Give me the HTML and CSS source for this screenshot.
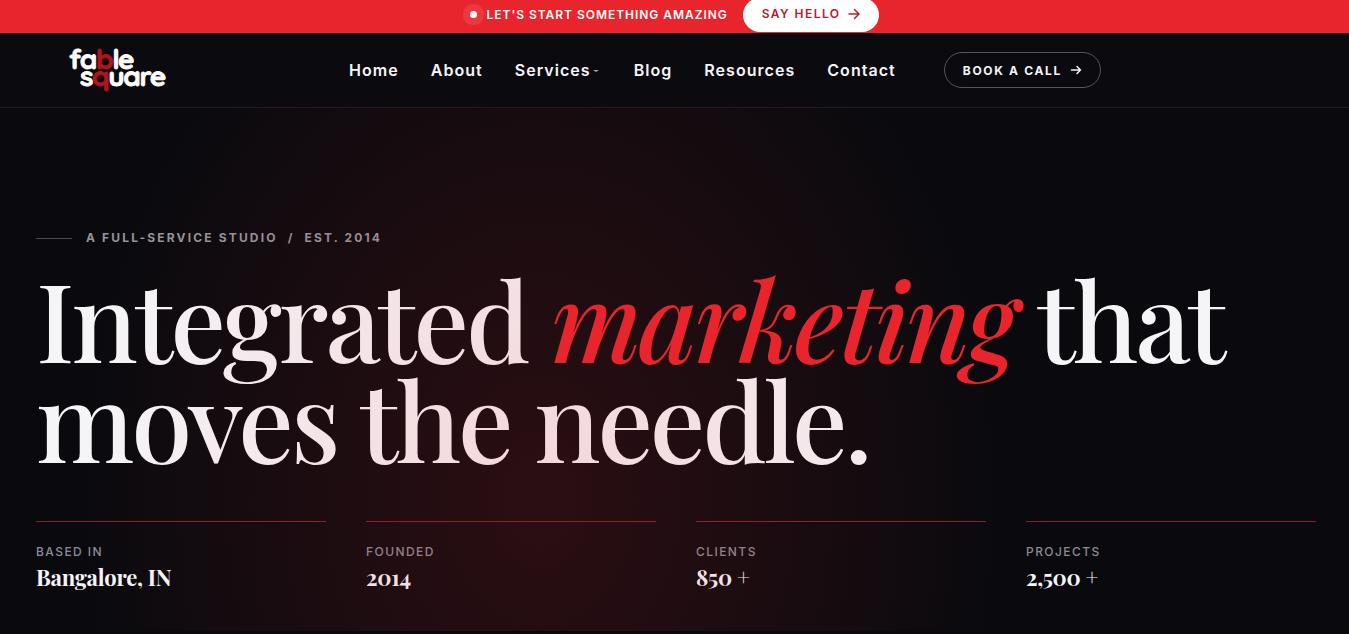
FILE: index.html
```html
<!DOCTYPE html>
<html lang="en">
<head>
  <meta charset="UTF-8" />
  <meta name="viewport" content="width=device-width, initial-scale=1" />
  <title>Fable Square - Integrated Marketing Studio</title>
  <link rel="stylesheet" href="styles.css">
</head>
<body>
  <div class="topbar">
    <span class="pulse"></span>
    <span class="topbar-text">Let's start something amazing</span>
    <a href="#hello" class="hello-btn">Say hello
      <svg class="arrow" viewBox="0 0 12 12" aria-hidden="true"><path d="M1 6h10M6.500 1.500 11 6l-4.500 4.500" /></svg>
    </a>
  </div>

  <header class="header">
    <a href="#" class="logo" aria-label="Fable Square">
      <svg width="104" height="52" viewBox="0 0 104 52">
        <text x="0" y="25">fa<tspan class="logo-red">b</tspan>le</text>
        <text x="11" y="42">s<tspan class="logo-red">q</tspan>uare</text>
      </svg>
    </a>
    <nav class="nav">
      <a href="#home">Home</a>
      <a href="#about">About</a>
      <a href="#services" class="has-menu">Services<span class="caret"></span></a>
      <a href="#blog">Blog</a>
      <a href="#resources">Resources</a>
      <a href="#contact">Contact</a>
    </nav>
    <a href="#call" class="call-btn">Book a call
      <svg class="arrow" viewBox="0 0 12 12" aria-hidden="true"><path d="M1.500 6h9M7 2.500 10.500 6 7 9.500" /></svg>
    </a>
  </header>

  <main class="hero">
    <div class="hero-inner">
      <p class="eyebrow">A full-service studio &nbsp;/&nbsp; Est. 2014</p>
      <h1>Integrated <em>marketing</em> that moves the needle.</h1>
      <dl class="stats">
        <div class="stat">
          <dt>Based in</dt>
          <dd>Bangalore, IN</dd>
        </div>
        <div class="stat">
          <dt>Founded</dt>
          <dd>2014</dd>
        </div>
        <div class="stat">
          <dt>Clients</dt>
          <dd>850 <span class="plus">+</span></dd>
        </div>
        <div class="stat">
          <dt>Projects</dt>
          <dd>2,500 <span class="plus">+</span></dd>
        </div>
      </dl>
    </div>
  </main>
</body>
</html>
```
FILE: styles.css
```css
* {
  box-sizing: border-box;
}
body {
  font-family: Inter, "Liberation Sans", sans-serif;
  background: #0a0a0e;
  color: #f5f5f8;
  margin: 0;
}
a {
  color: inherit;
  text-decoration: none;
}
.arrow {
  width: 12px;
  height: 12px;
  fill: none;
  stroke: currentColor;
  stroke-width: 1.5;
  stroke-linecap: round;
  stroke-linejoin: round;
}

/* announcement bar */
.topbar {
  display: flex;
  justify-content: center;
  align-items: center;
  height: 33px;
  padding-bottom: 4px;
  overflow: hidden;
  background: #e8242c;
  color: #fff;
}
.pulse {
  width: 7px;
  height: 7px;
  margin-right: 10px;
  border-radius: 50%;
  background: #fff;
  box-shadow: 0 0 0 7px rgba(255, 255, 255, 0.1);
}
.topbar-text {
  font-size: 12px;
  font-weight: 600;
  letter-spacing: 0.08em;
  text-transform: uppercase;
}
.hello-btn {
  display: flex;
  flex-shrink: 0;
  align-items: center;
  gap: 8px;
  height: 34px;
  margin-left: 15px;
  padding: 0 19px 2px;
  border-radius: 17px;
  background: #fff;
  color: #b3202c;
  font-size: 12px;
  font-weight: 600;
  letter-spacing: 0.12em;
  text-transform: uppercase;
}

/* header */
.header {
  display: flex;
  align-items: center;
  height: 75px;
  padding: 0 69px;
  background: #0b0b0f;
  border-bottom: 1px solid #221c21;
}
.logo {
  flex: 0 0 280px;
}
.logo svg {
  display: block;
  overflow: visible;
}
.logo text {
  font-family: Quicksand, Lato, sans-serif;
  font-size: 28px;
  font-weight: 700;
  letter-spacing: -0.05em;
  fill: #fff;
  stroke: #fff;
  stroke-width: 0.8;
}
.logo .logo-red {
  fill: #b5121b;
  stroke: #b5121b;
}
.nav {
  display: flex;
  align-items: center;
  gap: 32px;
  font-size: 16px;
  font-weight: 600;
  letter-spacing: 0.065em;
}
.has-menu {
  display: flex;
  align-items: center;
}
.caret {
  margin: 2px 3px 0 2px;
  border: 3px solid transparent;
  border-top: 2px solid #a5a5ad;
  border-bottom: 0;
}
.call-btn {
  display: flex;
  align-items: center;
  gap: 8px;
  height: 36px;
  margin-left: 48px;
  padding: 0 18px;
  border: 1px solid #55555b;
  border-radius: 18px;
  font-size: 12px;
  font-weight: 700;
  letter-spacing: 0.14em;
  text-transform: uppercase;
  white-space: nowrap;
}

/* hero */
.hero {
  position: relative;
  padding: 120px 33px 40px 36px;
}
/* the glow lies over the text and tints it */
.hero::after {
  content: "";
  position: absolute;
  inset: 0;
  background: radial-gradient(460px 600px at 40% 75%, rgba(232, 36, 44, 0.15), rgba(232, 36, 44, 0.08) 50%, transparent);
  pointer-events: none;
}
.hero-inner {
  max-width: 1280px;
  margin: 0 auto;
}
.eyebrow {
  display: flex;
  align-items: center;
  gap: 14px;
  margin: 0 0 20px;
  color: #94949c;
  font-size: 12px;
  font-weight: 700;
  line-height: 20px;
  letter-spacing: 0.18em;
  text-transform: uppercase;
}
.eyebrow::before {
  content: "";
  width: 36px;
  height: 1px;
  background: #4a4a50;
}
h1 {
  margin: 0 0 53px;
  font-family: "Playfair Display", "Liberation Serif", serif;
  font-size: 110px;
  font-weight: 500;
  line-height: 100px;
  letter-spacing: -0.028em;
}
h1 em {
  color: #e8242c;
}
.stats {
  display: grid;
  grid-template-columns: repeat(4, 1fr);
  gap: 40px;
  margin: 0;
}
.stat {
  padding-top: 20px;
  border-top: 1px solid #8c1d26;
}
.stat dt {
  color: #8b8b93;
  font-size: 12px;
  font-weight: 500;
  line-height: 20px;
  letter-spacing: 0.12em;
  text-transform: uppercase;
}
.stat dd {
  margin: 1px 0 0;
  font-family: "Playfair Display", "Liberation Serif", serif;
  font-size: 22px;
  font-weight: 700;
  line-height: 28px;
  letter-spacing: -0.01em;
}
.plus {
  font-weight: 400;
}
```
